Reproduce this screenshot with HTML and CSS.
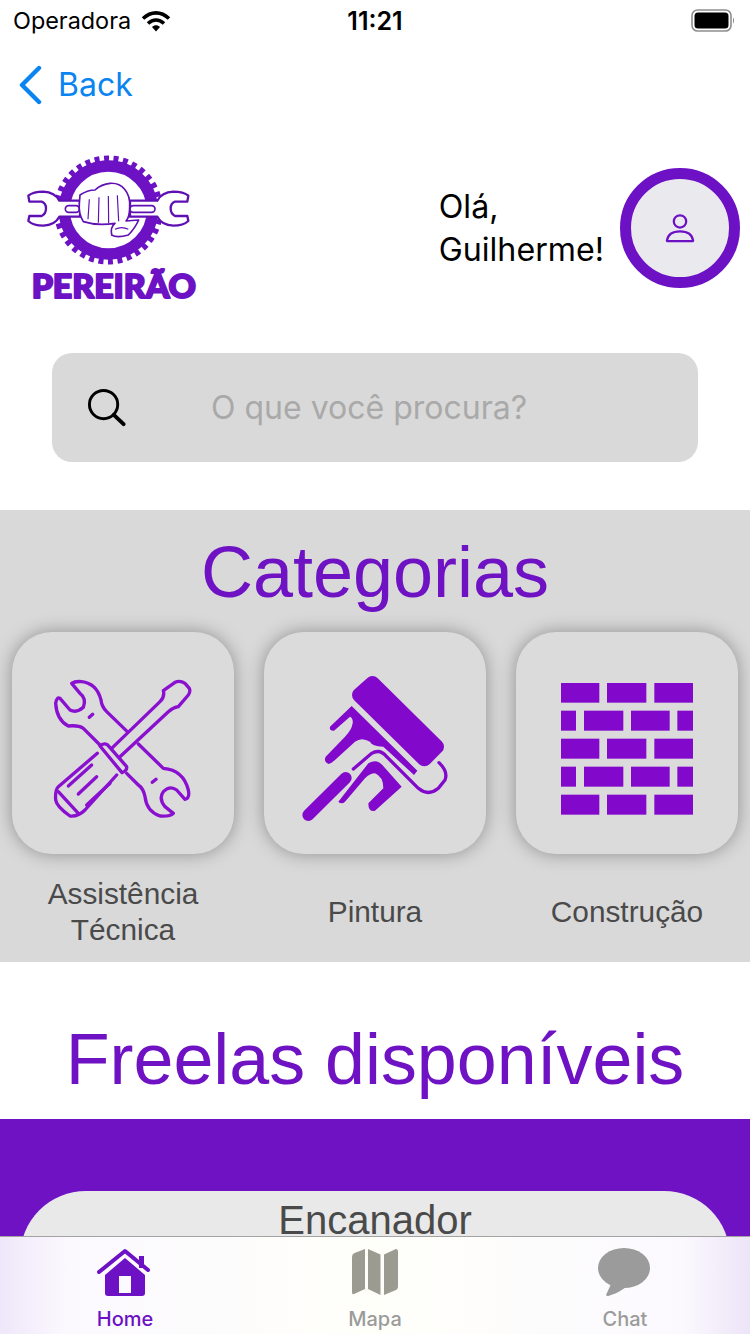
FILE: index.html
```html
<!DOCTYPE html>
<html lang="pt-BR">
<head>
<meta charset="utf-8">
<title>Pereirão</title>
<link rel="stylesheet" href="styles.css">
</head>
<body>
<div class="screen">
  <div class="status">
    <div class="status-left">
      <span>Operadora</span>
      <svg class="wifi" viewBox="0 0 30 22"><path d="M2 8.5C10 1 20 1 28 8.5M7 13.5C12 9 18 9 23 13.5" fill="none" stroke="#000" stroke-width="3.6"/><path d="M11 17C13.5 14.6 16.5 14.6 19 17L15 21.5Z" fill="#000"/></svg>
    </div>
    <span class="clock">11:21</span>
    <svg class="battery" viewBox="0 0 44 23"><rect x="1" y="1" width="39" height="21" rx="5.5" fill="none" stroke="#8e8e8e" stroke-width="1.6"/><rect x="3.5" y="3.5" width="34" height="16" rx="3.5" fill="#000"/><path d="M42 8.5C43.4 9.5 43.4 13.5 42 14.5Z" fill="#8e8e8e"/></svg>
  </div>
  <div class="nav">
    <svg class="chev" viewBox="0 0 24 40"><path d="M21 3L4 20L21 37" fill="none" stroke="#0a84f0" stroke-width="4.4" stroke-linecap="round" stroke-linejoin="round"/></svg>
    <span>Back</span>
  </div>
  <div class="header">
    <svg class="logo" viewBox="0 0 660 540">
      <circle cx="325" cy="210" r="132" fill="none" stroke="#6c12c4" stroke-width="34"/>
      <circle cx="325" cy="210" r="155" fill="none" stroke="#6c12c4" stroke-width="17" stroke-dasharray="15 13.65"/>
      <g fill="#fff" stroke="#5f10b4" stroke-width="7" stroke-linejoin="round">
        <path d="M85 167Q100 155 130 155Q165 157 178 182L240 182L240 230L178 230Q165 255 130 257Q100 257 85 243L88 228L125 228Q138 222 138 205Q138 190 125 185L88 185Z"/>
        <path d="M565 167Q550 155 520 155Q485 157 472 182L390 182L390 230L472 230Q485 255 520 257Q550 257 565 243L562 228L525 228Q512 222 512 205Q512 190 525 185L562 185Z"/>
        <rect x="196" y="197" width="42" height="20" rx="10" stroke-width="5"/>
        <rect x="390" y="197" width="75" height="20" rx="10" stroke-width="5"/>
      </g>
      <g fill="#fff" stroke="#5f10b4" stroke-width="5" stroke-linejoin="round">
        <path d="M240 165Q262 150 285 150Q305 132 330 130Q358 128 374 148Q391 168 389 200Q389 232 378 243L416 240Q405 265 385 285Q350 295 335 285Q330 262 345 250Q290 258 250 245Q235 220 238 190Z"/>
        <path d="M268 178L264 238M297 172L295 248M325 168L326 250M352 166L356 244" fill="none" stroke-width="3.500"/>
        <path d="M345 268Q365 258 385 268" fill="none" stroke-width="3.500"/>
      </g>
      <text class="logo-word" x="95" y="475" textLength="493" lengthAdjust="spacingAndGlyphs">PEREIRÃO</text>
    </svg>
    <div class="greet">Olá,<br>Guilherme!</div>
    <div class="avatar">
      <svg class="person" viewBox="0 0 32 34"><circle cx="16" cy="10" r="6.6" fill="none" stroke="#6c12c4" stroke-width="2.4"/><path d="M2 30.5C3 24 8 20.5 16 20.5S29 24 30 30.5Q30 31 29 31H3Q2 31 2 30.5Z" fill="none" stroke="#6c12c4" stroke-width="2.4" stroke-linejoin="round"/></svg>
    </div>
  </div>
  <div class="search">
    <svg class="lens" viewBox="0 0 40 40"><circle cx="17" cy="17" r="14.5" fill="none" stroke="#000" stroke-width="3"/><path d="M27.5 27.5L37.5 37" stroke="#000" stroke-width="4" stroke-linecap="round"/></svg>
    <span>O que você procura?</span>
  </div>
  <section class="cats">
    <h2 class="title">Categorias</h2>
    <div class="cat-row">
      <div class="cat">
        <div class="tile">
          <svg class="art" viewBox="36 36 666 666">
            <g fill="none" stroke="#8a10d0" stroke-width="10" stroke-linecap="round" stroke-linejoin="round">
              <path d="M382 335L320 275Q305 260 303 240Q290 190 245 185Q225 183 215 190L240 220Q260 235 250 262Q230 280 210 270L180 235Q170 230 167 250Q170 300 205 318Q235 315 250 325L300 375"/>
              <path d="M415 372L490 445Q550 450 565 510Q570 535 555 538L530 510Q510 495 490 515Q475 535 495 560L520 580Q510 590 480 588Q440 575 435 530Q430 505 415 495L380 460"/>
              <path d="M268 292L278 283M457 487L468 478"/>
              <path d="M335 385L480 245Q495 230 490 212L525 187Q540 180 555 190L568 205Q572 215 565 225L535 260Q520 262 505 275L360 410"/>
              <path d="M300 378Q310 368 322 374L380 440Q382 452 366 458Z"/>
              <path d="M292 400L175 500Q165 510 167 540Q170 560 210 588Q235 590 255 570L350 465"/>
              <path d="M205 498L275 435M235 522L290 470M260 555L330 490M175 515L235 580"/>
            </g>
          </svg>
        </div>
        <div class="cat-label">Assistência<br>Técnica</div>
      </div>
      <div class="cat">
        <div class="tile">
          <svg class="art" viewBox="27 36 666 666">
            <g fill="#8208cc">
              <path d="M352 190L545 380L508 417L313 225Z" stroke="#8208cc" stroke-width="44" stroke-linejoin="round"/>
              <path d="M290 258L225 320Q222 333 237 332L285 290Q295 295 293 310Q290 330 270 350L212 410Q205 425 220 432Q230 430 240 420L300 365Q320 350 345 365Q350 378 385 380L477 465L487 452Z"/>
              <path d="M250 545L340 430Q365 415 382 435L440 500L360 572Q340 578 340 550L385 505Q385 470 360 460Q345 460 330 475L270 545Q260 555 250 545Z"/>
            </g>
            <path d="M295 447L350 400Q375 385 395 410L490 505Q520 530 550 505L570 480Q580 455 552 428" fill="none" stroke="#8208cc" stroke-width="10" stroke-linecap="round"/>
            <path d="M160 585L272 474" fill="none" stroke="#8208cc" stroke-width="36" stroke-linecap="round"/>
          </svg>
        </div>
        <div class="cat-label">Pintura</div>
      </div>
      <div class="cat">
        <div class="tile">
          <svg class="art bricks" viewBox="33 36 666 666">
            <rect x="168" y="189" width="115" height="59"/><rect x="306" y="189" width="118" height="59"/><rect x="448" y="189" width="116" height="59"/>
            <rect x="168" y="272" width="45" height="60"/><rect x="237" y="272" width="118" height="60"/><rect x="378" y="272" width="116" height="60"/><rect x="517" y="272" width="47" height="60"/>
            <rect x="168" y="356" width="115" height="60"/><rect x="306" y="356" width="118" height="60"/><rect x="448" y="356" width="116" height="60"/>
            <rect x="168" y="440" width="45" height="60"/><rect x="237" y="440" width="118" height="60"/><rect x="378" y="440" width="116" height="60"/><rect x="517" y="440" width="47" height="60"/>
            <rect x="168" y="524" width="115" height="60"/><rect x="306" y="524" width="118" height="60"/><rect x="448" y="524" width="116" height="60"/>
          </svg>
        </div>
        <div class="cat-label">Construção</div>
      </div>
    </div>
  </section>
  <h2 class="title freelas">Freelas disponíveis</h2>
  <section class="jobs">
    <div class="job">Encanador</div>
  </section>
  <nav class="tabs">
    <div class="tab active">
      <svg class="tab-icon" viewBox="0 0 56 48"><path d="M2 24L28 3L51 22" fill="none" stroke="#6c12c4" stroke-width="4" stroke-linecap="round" stroke-linejoin="round"/><path d="M42 8h5v12h-5z" fill="#6c12c4"/><path fill-rule="evenodd" d="M28 10L48 27V45Q48 48 45 48H11Q8 48 8 45V27ZM22 28V45H34V28Z" fill="#6c12c4"/></svg>
      <span>Home</span>
    </div>
    <div class="tab">
      <svg class="tab-icon" viewBox="0 0 56 48"><g fill="#9b9b92"><path d="M18 1L7.500 5Q5 6 5 9V44Q5 47 7 46L18 41Z"/><path d="M21 1L33.500 6.500V47L21 41Z"/><path d="M37 6.500L49 1Q51 1 51 4V39Q51 41 49 42L37 47Z"/></g></svg>
      <span>Mapa</span>
    </div>
    <div class="tab">
      <svg class="tab-icon" viewBox="0 0 56 48"><ellipse cx="27" cy="20" rx="26" ry="20" fill="#9b9b9b"/><path d="M15 34L9 47Q10 49 14 47Q23 44 29 39Z" fill="#9b9b9b"/></svg>
      <span>Chat</span>
    </div>
  </nav>
</div>
</body>
</html>
```
FILE: styles.css
```css
* { box-sizing: border-box; }
html, body { margin: 0; padding: 0; background: #fff; }
.screen {
  position: relative;
  width: 750px;
  height: 1334px;
  overflow: hidden;
  background: #fff;
  font-family: Inter, "Liberation Sans", sans-serif;
  color: #000;
}
.status {
  display: flex;
  align-items: center;
  justify-content: space-between;
  height: 41px;
  margin-bottom: 1px;
  padding: 0 15px 0 13px;
  font-size: 23.4px;
  position: relative;
}
.status-left { display: flex; align-items: center; gap: 10px; }
.wifi { width: 30px; height: 22px; }
.clock {
  position: absolute;
  left: 0;
  right: 0;
  text-align: center;
  font-size: 25px;
  font-weight: 600;
}
.battery { width: 44px; height: 23px; }
.nav {
  display: flex;
  align-items: center;
  gap: 16px;
  height: 86px;
  padding: 0 0 0 18px;
  color: #0a84f0;
  font-size: 32px;
}
.chev { width: 24px; height: 40px; }
.nav span { position: relative; top: -1px; }
.header {
  display: flex;
  align-items: flex-start;
  margin-top: 12px;
  height: 180px;
  padding-right: 10px;
}
.logo { width: 220px; height: 180px; flex: none; }
.logo-word {
  font-family: Lato, "Liberation Sans", sans-serif;
  font-weight: 900;
  font-size: 96px;
  fill: #6c12c4;
  stroke: #6c12c4;
  stroke-width: 6px;
  stroke-linejoin: round;
}
.greet {
  margin: 45px 16px 0 auto;
  font-size: 32.2px;
  line-height: 43px;
  white-space: nowrap;
}
.avatar {
  display: flex;
  align-items: center;
  justify-content: center;
  flex: none;
  width: 120px;
  height: 120px;
  margin-top: 28px;
  border: 11px solid #6c12c4;
  border-radius: 50%;
  background: #e9e9ee;
}
.person { width: 30px; height: 32px; }
.search {
  display: flex;
  align-items: center;
  height: 109px;
  margin: 33px 52px 0;
  padding-left: 35px;
  border-radius: 20px;
  background: #d9d9d9;
  color: #a9a9a9;
  font-size: 32px;
}
.lens { width: 39px; height: 39px; flex: none; margin-right: 85px; }
.cats {
  height: 452px;
  margin-top: 48px;
  background: #d9d9d9;
}
.title {
  margin: 0;
  text-align: center;
  font-family: "Liberation Sans", Arial, sans-serif;
  font-weight: 400;
  font-size: 72px;
  line-height: 124px;
  height: 122px;
  color: #6e12c4;
}
.cat-row {
  display: flex;
  gap: 30px;
  padding: 0 12px;
}
.cat { width: 222px; }
.tile {
  width: 222px;
  height: 222px;
  border-radius: 40px;
  background: #dbdbdb;
  box-shadow: 0 0 18px rgba(0, 0, 0, 0.34);
}
.art { display: block; width: 222px; height: 222px; filter: blur(0.5px); }
.bricks { fill: #8208cc; }
.cat-label {
  display: flex;
  align-items: center;
  justify-content: center;
  height: 72px;
  margin-top: 22px;
  text-align: center;
  font-family: "Liberation Sans", Arial, sans-serif;
  font-size: 29.8px;
  line-height: 36px;
  color: #4a4a4a;
}
.freelas { height: 157px; font-size: 71.8px; line-height: 194px; }
.jobs {
  height: 300px;
  padding: 72px 20px 0;
  background: #6e12c4;
}
.job {
  height: 200px;
  border-radius: 66px 66px 0 0;
  background: #e9e9e9;
  text-align: center;
  font-family: "Liberation Sans", Arial, sans-serif;
  font-size: 40px;
  line-height: 58px;
  color: #4a4a4a;
}
.tabs {
  position: absolute;
  left: 0;
  right: 0;
  bottom: 0;
  display: flex;
  height: 98px;
  padding: 11px 0 0;
  border-top: 1px solid #a3a3a3;
  background: linear-gradient(90deg, #efe7fa 0%, #fbf9fe 9%, #fffffa 50%, #fbf9fe 91%, #ede4f8 100%);
}
.tab {
  display: flex;
  flex-direction: column;
  align-items: center;
  flex: 1;
  color: #9b9b9b;
  font-size: 20px;
  font-weight: 500;
}
.tab.active { color: #6c12c4; }
.tab-icon { width: 56px; height: 48px; }
.tab span { margin-top: 11px; line-height: 24px; }
```
